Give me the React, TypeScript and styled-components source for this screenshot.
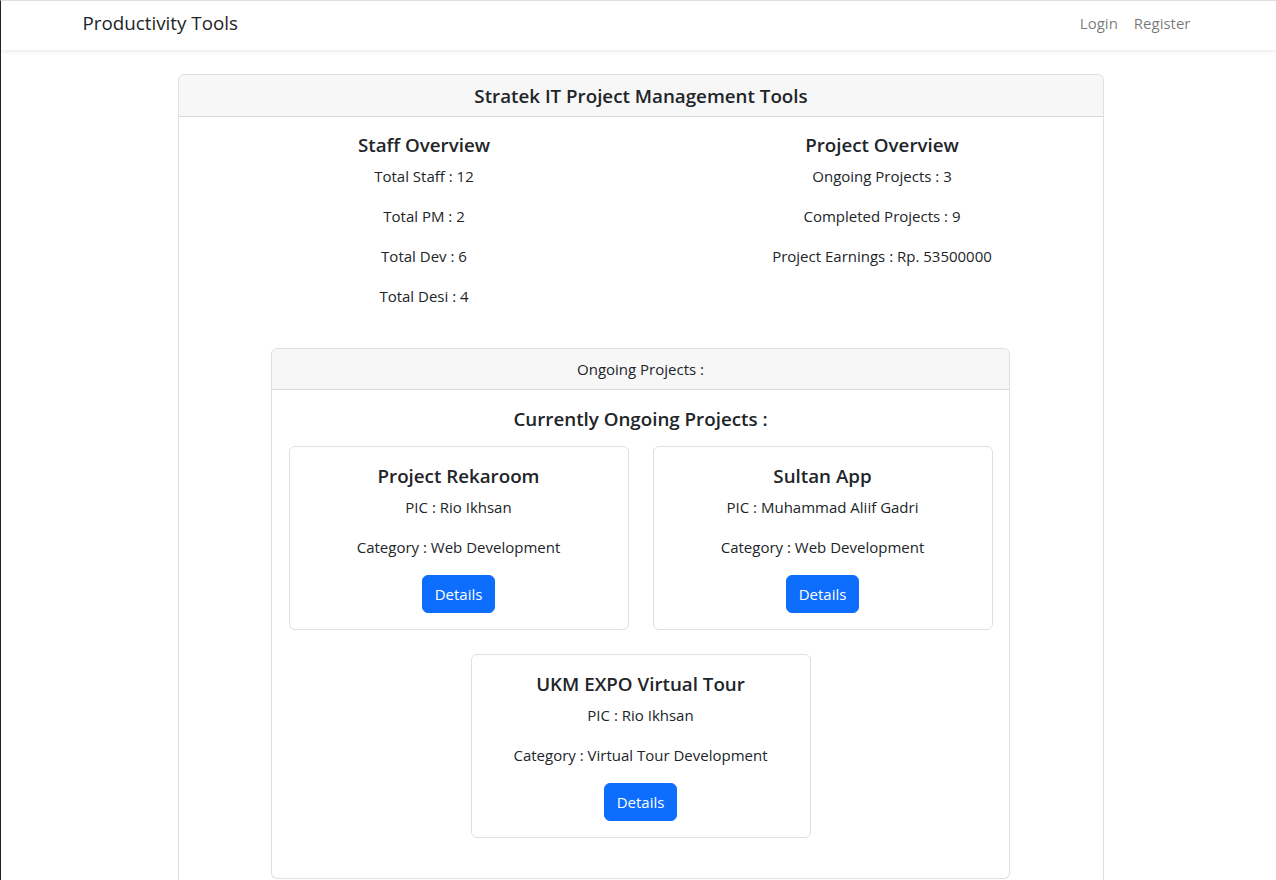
import React from "react";
import styled, { createGlobalStyle } from "styled-components";

const Global = createGlobalStyle`
  * { box-sizing: border-box; }
  html, body { margin: 0; padding: 0; background: #fff; }
  body {
    font-family: "Open Sans", "Noto Sans", sans-serif;
    font-size: 15px;
    line-height: 1.5;
    color: #212529;
    border-left: 1px solid #1f1f2e;
    border-top: 1px solid #dedede;
    min-height: 880px;
  }
`;

const Navbar = styled.nav`
  background: #fff;
  box-shadow: 0 2px 4px rgba(0, 0, 0, 0.08);
  height: 49px;
`;

const NavInner = styled.div`
  max-width: 1140px;
  margin: 0 auto;
  padding: 0 12px 4px;
  height: 100%;
  display: flex;
  align-items: center;
  justify-content: space-between;
`;

const Brand = styled.a`
  font-size: 18.8px;
  color: #212529;
  padding: 5px 0;
  margin-left: 2px;
  text-decoration: none;
`;

const NavLinks = styled.div`
  display: flex;
  margin-right: -2px;
`;

const NavLink = styled.a`
  color: rgba(0, 0, 0, 0.55);
  padding: 8px;
  text-decoration: none;
`;

const Main = styled.main`
  padding: 24px 0 0 5px;
  display: flex;
  justify-content: center;
`;

const Card = styled.div<{ $w: number }>`
  width: ${(p) => p.$w}px;
  border: 1px solid rgba(0, 0, 0, 0.125);
  border-radius: 6px;
  background: #fff;
  overflow: hidden;
`;

const CardHeader = styled.div<{ $big?: boolean }>`
  background: #f7f7f7;
  border-bottom: 1px solid rgba(0, 0, 0, 0.125);
  text-align: center;
  padding: ${(p) => (p.$big ? "9px 16px 8px" : "8px 16px")};
  font-size: ${(p) => (p.$big ? "18.75px" : "15px")};
  font-weight: ${(p) => (p.$big ? 600 : 400)};
  line-height: 24px;
  height: ${(p) => (p.$big ? "42px" : "41px")};
`;

const CardBody = styled.div<{ $pt?: number; $pb?: number }>`
  padding: ${(p) => p.$pt ?? 16}px 16px ${(p) => p.$pb ?? 16}px;
`;

const Overview = styled.div`
  display: grid;
  grid-template-columns: 1fr 1fr;
  margin-right: -24px;
`;

const Column = styled.div`
  text-align: center;
`;

const Heading = styled.h5<{ $mb?: number }>`
  margin: 0 0 ${(p) => p.$mb ?? 6}px;
  font-size: 18.75px;
  font-weight: 600;
  line-height: 26px;
  text-align: center;
`;

const Line = styled.p`
  margin: 0 0 16px;
  line-height: 24px;
`;

const OngoingWrap = styled.div`
  display: flex;
  justify-content: center;
  margin: 24px 0 0 -1px;
`;

const ProjectGrid = styled.div`
  display: grid;
  grid-template-columns: 340px 340px;
  column-gap: 24px;
  row-gap: 24px;
  justify-content: center;
`;

const ProjectCard = styled.div<{ $span?: boolean }>`
  border: 1px solid rgba(0, 0, 0, 0.125);
  border-radius: 6px;
  padding: 16px;
  text-align: center;
  ${(p) => (p.$span ? "grid-column: 1 / span 2; justify-self: center; width: 340px;" : "")}
`;

const Button = styled.button`
  background: #0d6efd;
  color: #fff;
  border: 1px solid #0d6efd;
  border-radius: 6px;
  padding: 6px 12px;
  font-family: inherit;
  font-size: 15px;
  line-height: 24px;
  cursor: pointer;
`;

const Spacer = styled.div`
  height: 200px;
`;

const projects = [
  { name: "Project Rekaroom", pic: "Rio Ikhsan", cat: "Web Development" },
  { name: "Sultan App", pic: "Muhammad Aliif Gadri", cat: "Web Development" },
  { name: "UKM EXPO Virtual Tour", pic: "Rio Ikhsan", cat: "Virtual Tour Development" },
];

export default function App() {
  return (
    <>
      <Global />
      <Navbar>
        <NavInner>
          <Brand href="#">Productivity Tools</Brand>
          <NavLinks>
            <NavLink href="#">Login</NavLink>
            <NavLink href="#">Register</NavLink>
          </NavLinks>
        </NavInner>
      </Navbar>
      <Main>
        <Card $w={926}>
          <CardHeader $big>Stratek IT Project Management Tools</CardHeader>
          <CardBody $pt={15}>
            <Overview>
              <Column>
                <Heading>Staff Overview</Heading>
                <Line>Total Staff : 12</Line>
                <Line>Total PM : 2</Line>
                <Line>Total Dev : 6</Line>
                <Line>Total Desi : 4</Line>
              </Column>
              <Column>
                <Heading>Project Overview</Heading>
                <Line>Ongoing Projects : 3</Line>
                <Line>Completed Projects : 9</Line>
                <Line>Project Earnings : Rp. 53500000</Line>
              </Column>
            </Overview>
            <OngoingWrap>
              <Card $w={739}>
                <CardHeader>Ongoing Projects :</CardHeader>
                <CardBody $pb={40}>
                  <Heading $mb={14}>Currently Ongoing Projects :</Heading>
                  <ProjectGrid>
                    {projects.map((p, i) => (
                      <ProjectCard key={p.name} $span={i === 2}>
                        <Heading>{p.name}</Heading>
                        <Line>PIC : {p.pic}</Line>
                        <Line>Category : {p.cat}</Line>
                        <Button>Details</Button>
                      </ProjectCard>
                    ))}
                  </ProjectGrid>
                </CardBody>
              </Card>
            </OngoingWrap>
            <Spacer />
          </CardBody>
        </Card>
      </Main>
    </>
  );
}
